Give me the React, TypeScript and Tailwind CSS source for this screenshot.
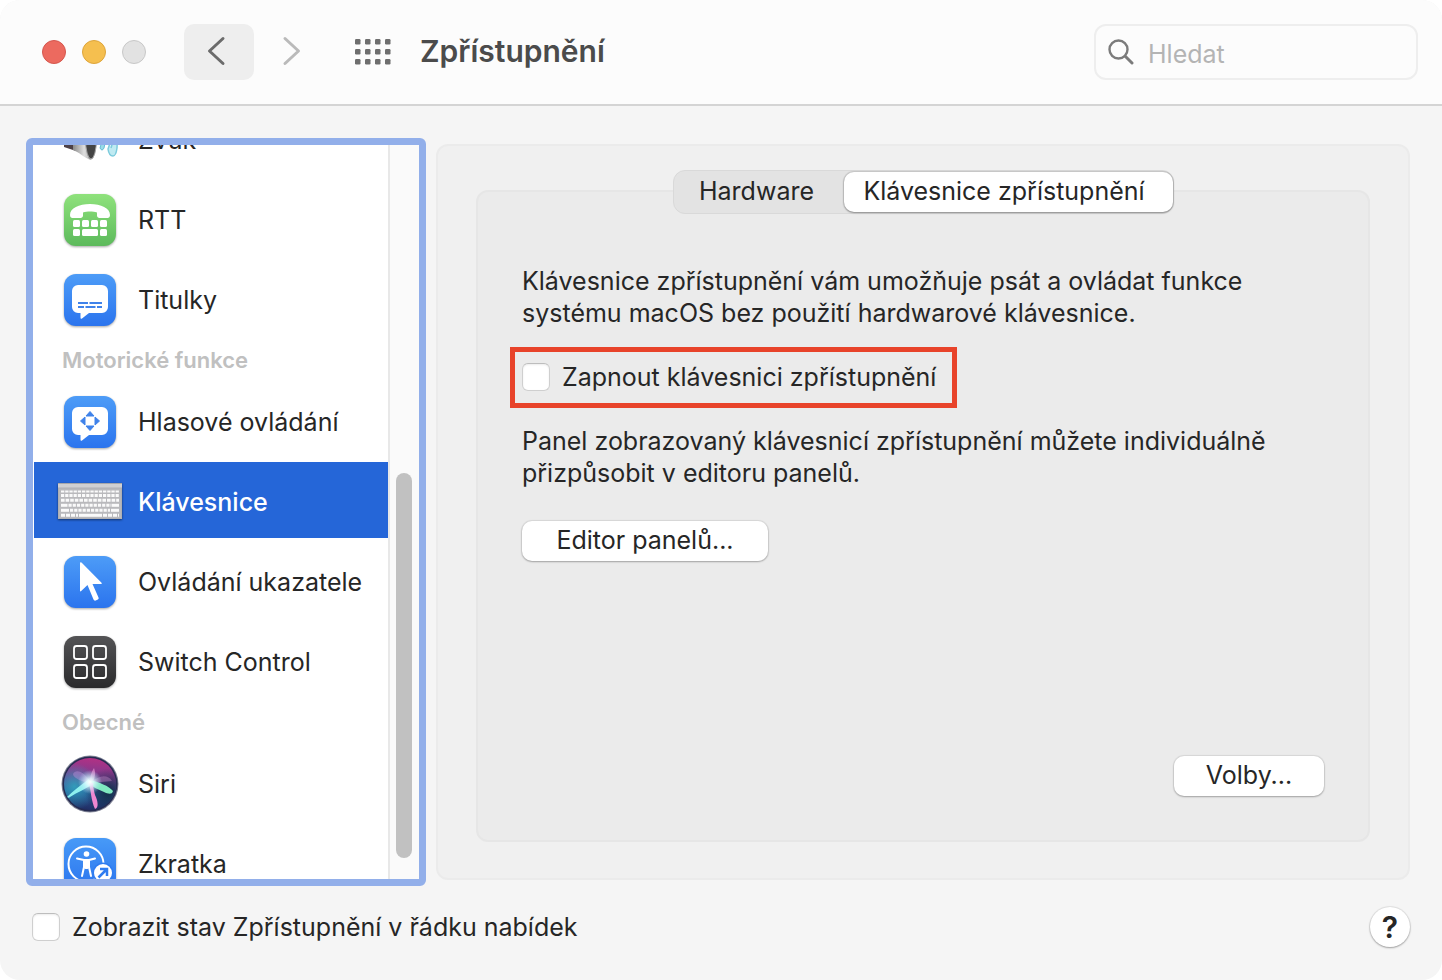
import React, { useState } from 'react';

interface SidebarItem {
  id: string;
  label: string;
  icon?: React.ReactNode;
  heading?: boolean;
}

interface TileProps {
  id: string;
  from: string;
  to: string;
  children: React.ReactNode;
}

// Rounded app tile with a vertical gradient, the glyph goes on top
const Tile: React.FC<TileProps> = ({ id, from, to, children }) => (
  <svg viewBox="0 0 52 52" className="h-13 w-13 shrink-0 overflow-visible drop-shadow-[0_1px_1px_rgba(0,0,0,0.35)]" aria-hidden="true">
    <defs>
      <linearGradient id={id} x1="0" y1="0" x2="0" y2="1">
        <stop offset="0" stopColor={from} />
        <stop offset="1" stopColor={to} />
      </linearGradient>
    </defs>
    <rect width="52" height="52" rx="12" fill={`url(#${id})`} />
    {children}
  </svg>
);

const BUBBLE = 'M14 11h24a6 6 0 0 1 6 6v16a6 6 0 0 1-6 6H25l-7 5.5q-1.5 1-1.5-1V39H14a6 6 0 0 1-6-6V17a6 6 0 0 1 6-6z';

const SoundIcon = () => (
  <svg viewBox="0 0 64 64" className="h-16 w-16" aria-hidden="true">
    <defs>
      <linearGradient id="metal" x1="0" y1="0" x2="1" y2="0">
        <stop offset="0" stopColor="#8a8a8a" />
        <stop offset="0.5" stopColor="#dedede" />
        <stop offset="1" stopColor="#9a9a9a" />
      </linearGradient>
    </defs>
    <path d="M6 22h12v21L6 39z" fill="#4c4148" />
    <path d="M15 20L33 10c5 6 6 35 0 42-5-1-9-6-18-10z" fill="url(#metal)" />
    <ellipse cx="33" cy="31" rx="5.500" ry="20" fill="#454545" stroke="#a5a5a5" />
    <path d="M41 20q5 10 1 20 2 4 4 0 3-10-1-20" fill="#9bdbe8" stroke="#62bdd3" />
    <path d="M48 14q7 15 2 27 1 7 5 7 3 0 4-8 1-14-6-26 4 14 0 26" fill="#bfeaf2" stroke="#7ccbdc" strokeWidth="1.500" />
  </svg>
);

const RttIcon = () => (
  <Tile id="rtt" from="#8fe27c" to="#5dba5c">
    <g fill="#fff">
      <path d="M6 21c0-7 9-11 20-11s20 4 20 11c0 2-1 3-2.500 3h-8c-1.500 0-2.500-1-2.500-2.500v-3c-4-1.300-10-1.300-14 0v3c0 1.500-1 2.500-2.500 2.500h-8C7 24 6 23 6 21z" />
      <rect x="9" y="26" width="7" height="7" rx="1.500" />
      <rect x="18" y="26" width="7" height="7" rx="1.500" />
      <rect x="27" y="26" width="7" height="7" rx="1.500" />
      <rect x="36" y="26" width="7" height="7" rx="1.500" />
      <rect x="9" y="35" width="7" height="7" rx="1.500" />
      <rect x="18" y="35" width="16" height="7" rx="1.500" />
      <rect x="36" y="35" width="7" height="7" rx="1.500" />
    </g>
  </Tile>
);

const CaptionsIcon = () => (
  <Tile id="captions" from="#4d9cf7" to="#2b74ee">
    <path d={BUBBLE} fill="#fff" />
    <path d="M14 29h10M25.500 29H38M14 33h6M21.500 33h10M33 33h5" stroke="#3f82ea" strokeWidth="2" />
  </Tile>
);

const VoiceIcon = () => (
  <Tile id="voice" from="#4d9cf7" to="#2b74ee">
    <path d={BUBBLE} fill="#fff" />
    <path d="M26 15.500l4 4.500h-8zM26 34.500l4-4.500h-8zM16.500 25l4.500-4v8zM35.500 25l-4.500-4v8z" fill="#3f82ea" stroke="#3f82ea" strokeLinejoin="round" />
  </Tile>
);

const KeyboardIcon = () => (
  <svg viewBox="0 0 64 36" className="mb-0.5 h-9 w-16 drop-shadow-[0_1px_1px_rgba(0,0,0,0.5)]" aria-hidden="true">
    <rect width="64" height="36" rx="0.500" fill="#d0d0d2" />
    <path d="M0 0.500h64" stroke="#a8a8ab" />
    <rect x="0.500" y="5" width="63" height="30.500" fill="#b9b9bc" stroke="#b0b0b3" />
    <g stroke="#fafafa" strokeWidth="3">
      <path d="M3 8.500h58" strokeWidth="2" strokeDasharray="3.300 0.900" />
      <path d="M3 12.500h58" strokeDasharray="3.200 1" />
      <path d="M3 17.300h58" strokeDasharray="3.600 1" />
      <path d="M3 22.300h6.500" />
      <path d="M10.500 22.300h43" strokeDasharray="3.200 1" />
      <path d="M54 22.300h7" />
      <path d="M3 27.300h8" />
      <path d="M12 27.300h40" strokeDasharray="3.200 1" />
      <path d="M53 27.300h8" />
      <path d="M3 32.300h17" strokeDasharray="4 1" />
      <path d="M21 32.300h23" />
      <path d="M45 32.300h16" strokeDasharray="4 1" />
    </g>
  </svg>
);

const PointerIcon = () => (
  <Tile id="pointer" from="#4d9cf7" to="#2b74ee">
    <path d="M16 7.500v27q0 1.500 1.200.5l6.300-6 6 14.500q.7 1.500 2.200 1l2.200-1q1.200-.7.600-2L28.500 28H37q1.500 0 .5-1.300L17.500 6.500Q16 5.500 16 7.500z" fill="#fff" />
  </Tile>
);

const SwitchIcon = () => (
  <Tile id="switch" from="#545456" to="#2a2a2c">
    <g fill="none" stroke="#fff" strokeWidth="1.800">
      <rect x="10" y="10" width="13" height="13" rx="2.500" />
      <rect x="29" y="10" width="13" height="13" rx="2.500" />
      <rect x="10" y="29" width="13" height="13" rx="2.500" />
      <rect x="29" y="29" width="13" height="13" rx="2.500" />
    </g>
  </Tile>
);

const SiriIcon = () => (
  <svg viewBox="0 0 58 58" className="h-[58px] w-[58px]" aria-hidden="true">
    <defs>
      <linearGradient id="siriBase" x1="0.500" y1="0" x2="0.400" y2="1">
        <stop offset="0" stopColor="#b23184" />
        <stop offset="0.350" stopColor="#7a3b90" />
        <stop offset="0.650" stopColor="#2a5698" />
        <stop offset="1" stopColor="#202c62" />
      </linearGradient>
      <radialGradient id="siriTeal" cx="0.200" cy="0.550" r="0.450">
        <stop offset="0" stopColor="#2fa8c0" stopOpacity="0.850" />
        <stop offset="1" stopColor="#2fa8c0" stopOpacity="0" />
      </radialGradient>
      <radialGradient id="siriDark" cx="0.850" cy="0.650" r="0.450">
        <stop offset="0" stopColor="#10283c" stopOpacity="0.900" />
        <stop offset="1" stopColor="#10283c" stopOpacity="0" />
      </radialGradient>
      <radialGradient id="siriGlow">
        <stop offset="0" stopColor="#fff" />
        <stop offset="0.300" stopColor="#e8fbff" stopOpacity="0.850" />
        <stop offset="1" stopColor="#b7e8ff" stopOpacity="0" />
      </radialGradient>
    </defs>
    <circle cx="29" cy="29" r="28.500" fill="#7f8395" />
    <circle cx="29" cy="29" r="27.500" fill="#252a50" />
    <circle cx="29" cy="29" r="26" fill="url(#siriBase)" />
    <circle cx="29" cy="29" r="26" fill="url(#siriTeal)" />
    <circle cx="29" cy="29" r="26" fill="url(#siriDark)" />
    <path d="M30 28C24 17 15 13 12 19c0 4 9 8 18 9z" fill="#d69ce8" opacity="0.350" />
    <path d="M29 28C29 20 31 16 33 13c2 5 1 10-2 15z" fill="#f0a0da" opacity="0.600" />
    <path d="M30 28c7-8 17-9 21-2-7 1-14 1-21 2z" fill="#c58ac7" opacity="0.400" />
    <path d="M28 24C20 30 12 36 6 42c2 1 2 1 3 0 8-5 15-8 22-12z" fill="#8ff0ee" />
    <path d="M28 25c10 2 20 6 24 11-1 4-5 3-9 1-5-2-11-5-15-8z" fill="#7fe8c0" />
    <path d="M28 28c2 8 2 17 6 26 4-1 3-8 0-14-1-4-2-8-2-12z" fill="#ee86d0" />
    <circle cx="29" cy="27" r="12" fill="url(#siriGlow)" />
  </svg>
);

const ShortcutIcon = () => (
  <Tile id="shortcut" from="#479af7" to="#2b74ee">
    <g fill="none" stroke="#fff" strokeWidth="2">
      <circle cx="22" cy="26" r="17.500" />
      <path d="M13 20.500l7 1.500v7l-2 9M31 20.500L25 22v7l2 9M20 22h5" strokeLinecap="round" strokeLinejoin="round" />
    </g>
    <path d="M19.500 21.500h6V30l-2 1-2 0-2-1z" fill="#fff" />
    <circle cx="22.500" cy="16" r="2.800" fill="#fff" />
    <circle cx="39" cy="35" r="10.500" fill="#2f7cf0" />
    <circle cx="39" cy="35" r="9" fill="#fff" />
    <path d="M34.500 39.500L42 32M36 31h7v7" fill="none" stroke="#2f7cf0" strokeWidth="2.500" />
  </Tile>
);

const ITEMS: SidebarItem[] = [
  { id: 'sound', label: 'Zvuk', icon: <SoundIcon /> },
  { id: 'rtt', label: 'RTT', icon: <RttIcon /> },
  { id: 'captions', label: 'Titulky', icon: <CaptionsIcon /> },
  { id: 'motor', label: 'Motorické funkce', heading: true },
  { id: 'voice', label: 'Hlasové ovládání', icon: <VoiceIcon /> },
  { id: 'keyboard', label: 'Klávesnice', icon: <KeyboardIcon /> },
  { id: 'pointer', label: 'Ovládání ukazatele', icon: <PointerIcon /> },
  { id: 'switch', label: 'Switch Control', icon: <SwitchIcon /> },
  { id: 'general', label: 'Obecné', heading: true },
  { id: 'siri', label: 'Siri', icon: <SiriIcon /> },
  { id: 'shortcut', label: 'Zkratka', icon: <ShortcutIcon /> },
];

const CHECKBOX =
  'h-7 w-7 shrink-0 appearance-none rounded-md border border-[#cfcfcf] border-t-[#bdbdbd] bg-white shadow-[inset_0_1px_2px_rgba(0,0,0,0.08)] checked:bg-[#2566d8]';
const PUSH_BUTTON =
  'h-10 rounded-[10px] bg-white pb-0.5 shadow-[0_0_1px_1px_rgba(0,0,0,0.08),0_1px_2px_rgba(0,0,0,0.25)]';

const Toolbar: React.FC = () => (
  <header className="flex h-[106px] shrink-0 items-center border-b-2 border-[#d4d4d4] bg-[#fcfcfc] pr-6 pl-[42px]">
    <div className="flex gap-4">
      <button aria-label="Zavřít" className="h-6 w-6 rounded-full border border-[#d5574e] bg-[#ec6a5f]" />
      <button aria-label="Minimalizovat" className="h-6 w-6 rounded-full border border-[#dea53b] bg-[#f5bf4f]" />
      <button aria-label="Zvětšit" disabled className="h-6 w-6 rounded-full border border-[#c8c8c8] bg-[#e2e2e2]" />
    </div>
    <button aria-label="Zpět" className="ml-[38px] flex h-14 w-[70px] items-center justify-center rounded-[10px] bg-[#eeeeee] pb-0.5">
      <svg viewBox="0 0 20 32" className="mr-1.5 h-8 w-5" fill="none" stroke="#6b6b6b" strokeWidth="3" strokeLinecap="round" strokeLinejoin="round">
        <path d="M17 3.500L3.500 16 17 28.500" />
      </svg>
    </button>
    <button aria-label="Vpřed" disabled className="ml-[27px] flex pb-0.5">
      <svg viewBox="0 0 20 32" className="h-8 w-5" fill="none" stroke="#bababa" strokeWidth="3" strokeLinecap="round" strokeLinejoin="round">
        <path d="M4 3.500L17.500 16 4 28.500" />
      </svg>
    </button>
    <button aria-label="Zobrazit vše" className="ml-[54px]">
      <svg viewBox="0 0 36 26" className="h-[26px] w-9" fill="#6e6e6e">
        {[0, 10, 20, 30].map((x) =>
          [0, 10, 20].map((y) => <rect key={`${x}-${y}`} x={x} y={y} width="5.500" height="5.500" rx="1.200" />)
        )}
      </svg>
    </button>
    <h1 className="ml-[29px] pb-0.5 text-[30px] leading-9 font-semibold text-[#4b4b4b]">Zpřístupnění</h1>
    <label className="ml-auto flex h-14 w-[324px] items-center rounded-xl border-2 border-[#eeeeee] px-3">
      <svg viewBox="0 0 26 26" className="h-[26px] w-[26px] shrink-0" fill="none" stroke="#7b7b7b" strokeWidth="2.400" strokeLinecap="round">
        <circle cx="10.500" cy="10.500" r="9" />
        <path d="M17.500 17.500l6.500 6.500" strokeWidth="3" />
      </svg>
      <input
        type="text"
        aria-label="Hledat"
        placeholder="Hledat"
        className="ml-3.5 w-full min-w-0 bg-transparent pt-1 text-[25px] text-[#262626] outline-none placeholder:text-[#b4b4b4]"
      />
    </label>
  </header>
);

const Sidebar: React.FC = () => {
  const [selected, setSelected] = useState('keyboard');

  return (
    <nav className="flex w-[400px] shrink-0 overflow-hidden rounded-md border-7 border-[#92afea] bg-white">
      {/* List is scrolled to its lower part, first row is half hidden */}
      <ul className="-mt-[45px] flex min-w-0 flex-1 flex-col gap-1 pl-px">
        {ITEMS.map((item) =>
          item.heading ? (
            <li key={item.id} className="flex h-[38px] shrink-0 items-center pt-0.5 pl-7 text-[22px] font-semibold text-[#c0c0c0]">
              {item.label}
            </li>
          ) : (
            <li key={item.id} className="shrink-0">
              <button
                onClick={() => setSelected(item.id)}
                className={`flex h-[76px] w-full items-center gap-4 pt-1 pl-6 text-left whitespace-nowrap ${
                  selected === item.id ? 'bg-[#2566d8] font-medium text-white' : ''
                }`}
              >
                <span className="flex w-16 shrink-0 justify-center">{item.icon}</span>
                {item.label}
              </button>
            </li>
          )
        )}
      </ul>
      <div className="flex w-[31px] shrink-0 flex-col justify-end border-l-2 border-[#e8e8e8] bg-[#fafafa] pb-[21px] pl-1.5">
        <div className="h-[54%] w-4 rounded-full bg-[#c1c1c1]" />
      </div>
    </nav>
  );
};

export default function App() {
  const [tab, setTab] = useState('keyboard');
  const tabClass = (name: string) =>
    tab === name
      ? 'h-10 rounded-[10px] bg-white shadow-[0_0_1px_1px_rgba(0,0,0,0.12),0_1px_2px_rgba(0,0,0,0.3)]'
      : 'h-10';

  return (
    <div className="flex h-screen min-h-[800px] flex-col overflow-hidden rounded-[20px] bg-[#f5f5f5] font-['Inter','Liberation_Sans',sans-serif] text-[25px] leading-8 text-[#262626]">
      <Toolbar />
      <main className="flex min-h-0 flex-1 gap-2.5 pt-8 pr-8 pl-[26px]">
        <Sidebar />
        <section className="my-1.5 flex min-w-0 flex-1 flex-col rounded-xl border-2 border-[#ebebeb] bg-[#f0f0f0] px-[38px] pt-6 pb-9">
          {/* Tabs sit across the top edge of the group box */}
          <div role="tablist" className="z-10 -mb-6 flex h-11 items-center self-center rounded-xl border border-[#d9d9d9] bg-[#e3e3e3]">
            <button role="tab" aria-selected={tab === 'hardware'} onClick={() => setTab('hardware')} className={`w-[170px] pr-1 pb-0.5 ${tabClass('hardware')}`}>
              Hardware
            </button>
            <button role="tab" aria-selected={tab === 'keyboard'} onClick={() => setTab('keyboard')} className={`w-[329px] pr-2 pb-0.5 ${tabClass('keyboard')}`}>
              Klávesnice zpřístupnění
            </button>
          </div>
          <div className="flex flex-1 flex-col items-start rounded-xl border-2 border-[#e6e6e6] bg-[#ebebeb] px-8 pt-[73px] pb-11">
            <p className="px-3">
              Klávesnice zpřístupnění vám umožňuje psát a ovládat funkce
              <br />
              systému macOS bez použití hardwarové klávesnice.
            </p>
            <label className="mt-[18px] flex h-[61px] items-center gap-3 border-5 border-[#e8432a] pr-4 pb-0.5 pl-[7px]">
              <input type="checkbox" className={CHECKBOX} />
              Zapnout klávesnici zpřístupnění
            </label>
            <p className="mt-[17px] px-3">
              Panel zobrazovaný klávesnicí zpřístupnění můžete individuálně
              <br />
              přizpůsobit v editoru panelů.
            </p>
            <button className={`mt-8 ml-3 w-[246px] ${PUSH_BUTTON}`}>Editor panelů...</button>
            <button className={`mt-auto mr-3 w-[150px] self-end ${PUSH_BUTTON}`}>Volby...</button>
          </div>
        </section>
      </main>
      <footer className="flex shrink-0 items-center justify-between pt-[21px] pr-8 pb-[33px] pl-8">
        <label className="flex items-center gap-3">
          <input type="checkbox" className={CHECKBOX} />
          Zobrazit stav Zpřístupnění v řádku nabídek
        </label>
        <button aria-label="Nápověda" className="h-10 w-10 rounded-full bg-white text-[30px] font-semibold shadow-[0_0_1px_1px_rgba(0,0,0,0.08),0_1px_2px_rgba(0,0,0,0.3)]">
          ?
        </button>
      </footer>
    </div>
  );
}
